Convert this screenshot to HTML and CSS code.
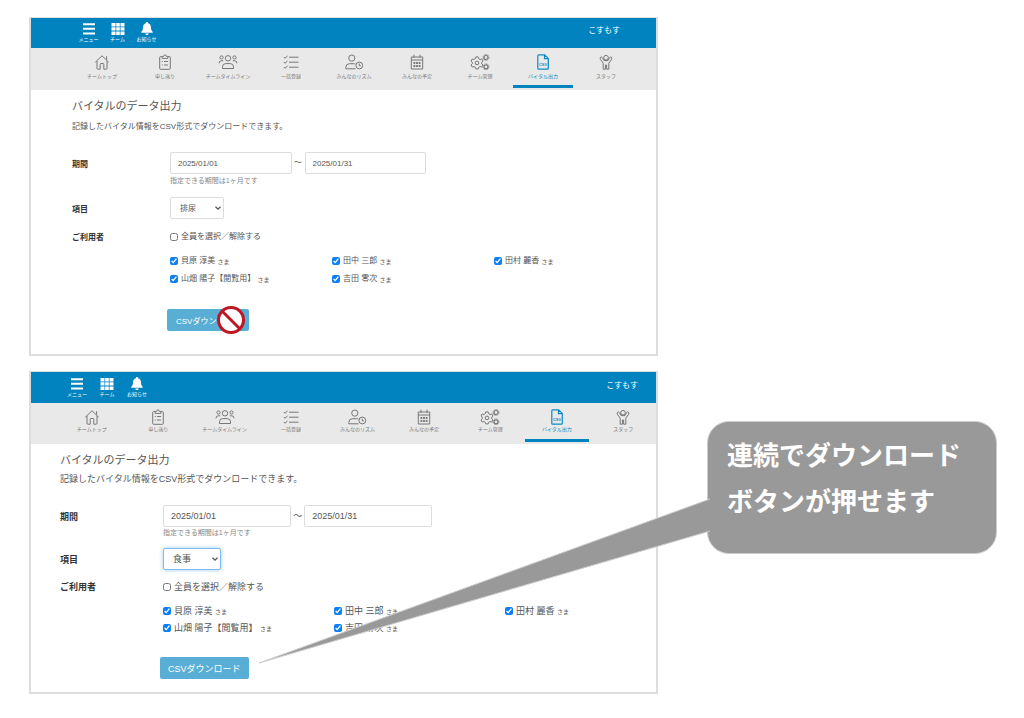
FILE: index.html
```html
<!DOCTYPE html>
<html lang="ja">
<head>
<meta charset="utf-8">
<title>バイタルのデータ出力</title>
<link rel="stylesheet" href="styles.css">
</head>
<body>
<svg class="sprite" aria-hidden="true">
  <symbol id="i-menu" viewBox="0 0 14 14"><path d="M1 2.200h12M1 6.800h12M1 11.400h12" stroke="currentColor" stroke-width="2" fill="none"/></symbol>
  <symbol id="i-grid" viewBox="0 0 14 14"><path fill="currentColor" d="M.5 1H4.500v3.400H.5zM5.200 1h3.600v3.400H5.200zM9.500 1h4v3.400h-4zM.5 5.200h4v3.400h-4zM5.200 5.200h3.600v3.400H5.200zM9.500 5.200h4v3.400h-4zM.5 9.400h4V13h-4zM5.200 9.400h3.600V13H5.200zM9.500 9.400h4V13h-4z"/></symbol>
  <symbol id="i-bell" viewBox="0 0 14 14"><path fill="currentColor" d="M7 0c.8 0 1.100.5 1.100 1.200C10 1.700 11 3.300 11 5.200c0 2.500.6 3.600 1.700 4.500v1H1.300v-1C2.400 8.800 3 7.700 3 5.200c0-1.900 1-3.500 2.900-4C5.900.5 6.200 0 7 0zM5.300 11.400h3.400C8.600 12.400 7.900 13 7 13s-1.600-.6-1.700-1.600z"/></symbol>
  <symbol id="i-home" viewBox="0 0 20 16"><path d="M3.300 8.200 10 1.800l6.700 6.400M5 7v7.300q0 .9.900.9H8.200V10.300q0-.8.800-.8h2q.8 0 .8.800v4.900h2.300q.9 0 .9-.9V7M14.600 2.200v3.600"/></symbol>
  <symbol id="i-clip" viewBox="0 0 20 16"><path d="M7.200 2.600H5.600q-.9 0-.9.900v10.900q0 .9.900.9h8.800q.9 0 .9-.9V3.500q0-.9-.9-.9h-1.600M7.200 4.400V2.400h1.400q.2-1.500 1.400-1.500t1.400 1.500h1.400v2zM9 7.500h4M9 11h4M6.800 7.500h1M6.800 11h1"/></symbol>
  <symbol id="i-team" viewBox="0 0 20 16"><circle cx="10" cy="4.300" r="2.700"/><circle cx="3.500" cy="3.500" r="1.600"/><circle cx="16.500" cy="3.500" r="1.600"/><path d="M4.500 14.500v-1.700q0-3.200 3.200-3.200h4.600q3.200 0 3.200 3.200v1.700zM1 9.300q0-2.500 2.200-2.500h2M19 9.300q0-2.500-2.200-2.500h-2"/></symbol>
  <symbol id="i-list" viewBox="0 0 20 16"><path d="M8 3.200h9.500M8 8.200h9.500M8 13.200h9.500M2.800 3l1.300 1.300 2.400-2.600M2.800 8l1.300 1.300 2.400-2.600M2.800 13l1.300 1.300 2.400-2.600"/></symbol>
  <symbol id="i-rhythm" viewBox="0 0 20 16"><circle cx="7.800" cy="4.100" r="3.100"/><path d="M11.500 14.800H1.800v-1.300q0-3.800 3.600-3.800H9.800q1 0 1.600.3"/><circle cx="15.300" cy="11.500" r="3.400"/><path d="M15.300 9.600v2.200h1.600"/></symbol>
  <symbol id="i-cal" viewBox="0 0 20 16"><path d="M4.300 3h11.400v12H4.300zM4.300 6h11.400M7 .7v3M13 .7v3"/><path d="M6.500 9h7M6.500 12h7" stroke-width="2" stroke-dasharray="1.800 .8"/></symbol>
  <symbol id="i-gears" viewBox="0 0 20 16"><path d="m5.800 2.900 2.400 0 .4 1.700 1.500.9 1.700-.6 1.200 2.100-1.300 1.200v1.600l1.300 1.200-1.200 2.100-1.700-.6-1.500.9-.4 1.500H5.800l-.4-1.500-1.500-.9-1.700.6L1 11l1.300-1.200V8.200L1 7l1.200-2.100 1.700.6 1.500-.9z"/><circle cx="7" cy="8.900" r="1.800"/><circle cx="16" cy="3.500" r="2" stroke-width="1.200"/><circle cx="16" cy="12.800" r="2" stroke-width="1.200"/><circle cx="16" cy="3.500" r="3" stroke-width=".8" stroke-dasharray="1.200 .8"/><circle cx="16" cy="12.800" r="3" stroke-width=".8" stroke-dasharray="1.200 .8"/></symbol>
  <symbol id="i-csv" viewBox="0 0 20 16"><path d="M5.700.8h6l3.600 3.600v9.900q0 .9-.9.900H5.700q-.9 0-.9-.9V1.700q0-.9.900-.9zM11.500.8v3.800h3.800" stroke-width="1.200"/><text class="csv-mark" x="10" y="12">CSV</text></symbol>
  <symbol id="i-staff" viewBox="0 0 20 16"><circle cx="10" cy="3.700" r="2.300"/><path d="M7.200 15.200V9.200L4.300 5.200q-.5-1.200.3-2 .9-.7 1.700.3L8 6.600h4l1.700-3.100q.8-1 1.700-.3.800.8.3 2l-2.900 4v6h-2.200V11H9.400v4.200z"/></symbol>
  <symbol id="i-arrow" viewBox="0 0 8 8"><path d="M1.500 2.700 4 5.200l2.500-2.500" stroke="currentColor" stroke-width="1.300" fill="none"/></symbol>
</svg>

<main class="page">
  <section class="panel panel-a">
    <header class="topbar">
      <button class="top-btn" type="button"><svg><use href="#i-menu"/></svg><span>メニュー</span></button>
      <button class="top-btn" type="button"><svg><use href="#i-grid"/></svg><span>チーム</span></button>
      <button class="top-btn" type="button"><svg><use href="#i-bell"/></svg><span>お知らせ</span></button>
      <span class="user">こすもす</span>
    </header>
    <nav class="tabs">
      <a class="tab" href="#"><svg><use href="#i-home"/></svg><span>チームトップ</span></a>
      <a class="tab" href="#"><svg><use href="#i-clip"/></svg><span>申し送り</span></a>
      <a class="tab" href="#"><svg><use href="#i-team"/></svg><span>チームタイムライン</span></a>
      <a class="tab" href="#"><svg><use href="#i-list"/></svg><span>一括登録</span></a>
      <a class="tab" href="#"><svg><use href="#i-rhythm"/></svg><span>みんなのリズム</span></a>
      <a class="tab" href="#"><svg><use href="#i-cal"/></svg><span>みんなの予定</span></a>
      <a class="tab" href="#"><svg><use href="#i-gears"/></svg><span>チーム管理</span></a>
      <a class="tab active" href="#"><svg><use href="#i-csv"/></svg><span>バイタル出力</span></a>
      <a class="tab" href="#"><svg><use href="#i-staff"/></svg><span>スタッフ</span></a>
    </nav>
    <form class="content">
      <h1 class="title">バイタルのデータ出力</h1>
      <p class="lead">記録したバイタル情報をCSV形式でダウンロードできます。</p>
      <div class="row period">
        <label class="name" for="a-from">期間</label>
        <div>
          <div class="dates"><input class="date" id="a-from" type="text" value="2025/01/01"><span class="tilde">～</span><input class="date" type="text" aria-label="終了日" value="2025/01/31"></div>
          <p class="hint">指定できる期間は1ヶ月です</p>
        </div>
      </div>
      <div class="row item">
        <label class="name" for="a-item">項目</label>
        <div class="select"><select id="a-item"><option>排尿</option></select><svg><use href="#i-arrow"/></svg></div>
      </div>
      <div class="row users">
        <span class="name">ご利用者</span>
        <div>
          <label class="check"><input type="checkbox">全員を選択／解除する</label>
          <div class="people">
            <label class="check"><input type="checkbox" checked>貝原 淳美 <small>さま</small></label>
            <label class="check"><input type="checkbox" checked>田中 三郎 <small>さま</small></label>
            <label class="check"><input type="checkbox" checked>田村 麗香 <small>さま</small></label>
            <label class="check"><input type="checkbox" checked>山畑 陽子【閲覧用】 <small>さま</small></label>
            <label class="check"><input type="checkbox" checked>吉田 零次 <small>さま</small></label>
          </div>
        </div>
      </div>
      <div class="row submit">
        <div class="stamp-box">
          <button class="download" type="button">CSVダウンロード</button>
          <svg class="stamp" viewBox="0 0 30 30" aria-label="禁止"><circle cx="15" cy="15" r="12.500" fill="#fff" stroke="#be1622" stroke-width="3"/><path d="M6.500 6.500l17 17" stroke="#be1622" stroke-width="3"/></svg>
        </div>
      </div>
    </form>
  </section>

  <section class="panel panel-b">
    <header class="topbar">
      <button class="top-btn" type="button"><svg><use href="#i-menu"/></svg><span>メニュー</span></button>
      <button class="top-btn" type="button"><svg><use href="#i-grid"/></svg><span>チーム</span></button>
      <button class="top-btn" type="button"><svg><use href="#i-bell"/></svg><span>お知らせ</span></button>
      <span class="user">こすもす</span>
    </header>
    <nav class="tabs">
      <a class="tab" href="#"><svg><use href="#i-home"/></svg><span>チームトップ</span></a>
      <a class="tab" href="#"><svg><use href="#i-clip"/></svg><span>申し送り</span></a>
      <a class="tab" href="#"><svg><use href="#i-team"/></svg><span>チームタイムライン</span></a>
      <a class="tab" href="#"><svg><use href="#i-list"/></svg><span>一括登録</span></a>
      <a class="tab" href="#"><svg><use href="#i-rhythm"/></svg><span>みんなのリズム</span></a>
      <a class="tab" href="#"><svg><use href="#i-cal"/></svg><span>みんなの予定</span></a>
      <a class="tab" href="#"><svg><use href="#i-gears"/></svg><span>チーム管理</span></a>
      <a class="tab active" href="#"><svg><use href="#i-csv"/></svg><span>バイタル出力</span></a>
      <a class="tab" href="#"><svg><use href="#i-staff"/></svg><span>スタッフ</span></a>
    </nav>
    <form class="content">
      <h1 class="title">バイタルのデータ出力</h1>
      <p class="lead">記録したバイタル情報をCSV形式でダウンロードできます。</p>
      <div class="row period">
        <label class="name" for="b-from">期間</label>
        <div>
          <div class="dates"><input class="date" id="b-from" type="text" value="2025/01/01"><span class="tilde">～</span><input class="date" type="text" aria-label="終了日" value="2025/01/31"></div>
          <p class="hint">指定できる期間は1ヶ月です</p>
        </div>
      </div>
      <div class="row item">
        <label class="name" for="b-item">項目</label>
        <div class="select focused"><select id="b-item"><option>食事</option></select><svg><use href="#i-arrow"/></svg></div>
      </div>
      <div class="row users">
        <span class="name">ご利用者</span>
        <div>
          <label class="check"><input type="checkbox">全員を選択／解除する</label>
          <div class="people">
            <label class="check"><input type="checkbox" checked>貝原 淳美 <small>さま</small></label>
            <label class="check"><input type="checkbox" checked>田中 三郎 <small>さま</small></label>
            <label class="check"><input type="checkbox" checked>田村 麗香 <small>さま</small></label>
            <label class="check"><input type="checkbox" checked>山畑 陽子【閲覧用】 <small>さま</small></label>
            <label class="check"><input type="checkbox" checked>吉田 零次 <small>さま</small></label>
          </div>
        </div>
      </div>
      <div class="row submit">
        <div class="stamp-box"><button class="download" type="button">CSVダウンロード</button></div>
      </div>
    </form>
  </section>

  <aside class="callout">
    <p>連続でダウンロード<br>ボタンが押せます</p>
    <svg class="tail" viewBox="0 0 452 166" aria-hidden="true"><path d="M452 1 1 165 452 33" fill="#999" stroke="#ccc"/></svg>
  </aside>
</main>
</body>
</html>
```
FILE: styles.css
```css
* { box-sizing: border-box; }

body {
  margin: 0;
  background: #fff;
  color: #555;
  font-family: "Liberation Sans", "Noto Sans CJK JP", sans-serif;
}

h1, p { margin: 0; }

button, input, select { font-family: inherit; }

.sprite { display: none; }

.page {
  display: grid;
  grid-template-columns: minmax(0, 629fr) minmax(0, 290fr);
  column-gap: 49px;
  row-gap: 15px;
  align-items: start;
  padding: 17px 27px 24px 29px;
}

.panel {
  grid-column: 1;
  border: 2px solid #ddd;
  border-top-width: 1px;
}

.panel-a {
  --text: 8px;
  --label-col: 98px;
  --inset: 41px;
  --tabs-end: 20px;
  --user-end: 36px;
  --top-inset: 43px;
  --top-btn: 29px;
  --top-pad: 4px;
  --bar: 30px;
  --nav: 42px;
  --date: 25%;
  --select: 54px;
  --cols: 1fr 1fr 1fr;
}

.panel-b {
  --text: 9px;
  --label-col: 103px;
  --inset: 29px;
  --tabs-end: 1px;
  --user-end: 18px;
  --top-inset: 31px;
  --top-btn: 30px;
  --top-pad: 5px;
  --bar: 31px;
  --nav: 41px;
  --date: 26%;
  --select: 58px;
  --cols: 171fr 171fr 151fr;
}

.topbar {
  display: flex;
  align-items: flex-start;
  min-height: var(--bar);
  padding: var(--top-pad) var(--user-end) 0 var(--top-inset);
  background: #0083bf;
  color: #fff;
}

.top-btn {
  display: flex;
  flex-direction: column;
  align-items: center;
  width: var(--top-btn);
  padding: 0;
  border: 0;
  background: none;
  color: inherit;
  font-size: 5px;
  line-height: 7px;
  white-space: nowrap;
}

.top-btn svg { width: 14px; height: 14px; }

.user {
  margin-left: auto;
  font-size: 8px;
  line-height: 18px;
}

.tabs {
  display: grid;
  grid-template-columns: repeat(9, minmax(0, 1fr));
  column-gap: 3px;
  min-height: var(--nav);
  padding: 6px var(--tabs-end) 2px var(--inset);
  background: #e9e9e9;
}

.tab {
  display: flex;
  flex-direction: column;
  align-items: center;
  gap: 2px;
  border-bottom: 3px solid transparent;
  color: #777;
  font-size: 5px;
  line-height: 8px;
  text-decoration: none;
  white-space: nowrap;
}

.panel-b .tab { gap: 0; }

.tab svg {
  width: 20px;
  height: 16px;
  fill: none;
  stroke: currentColor;
  stroke-width: 1;
}

.tab.active {
  border-color: #0083bf;
  color: #0b8bc5;
}

.csv-mark {
  fill: currentColor;
  stroke: none;
  font-size: 4px;
  font-weight: bold;
  text-anchor: middle;
}

.content {
  padding: 8px 0 23px var(--inset);
  font-size: var(--text);
}

.panel-b .content { padding: 8px 0 13px var(--inset); }

.title {
  font-size: 11px;
  font-weight: normal;
  line-height: 16px;
}

.lead {
  margin-top: 7px;
  line-height: 12px;
}

.panel-b .lead { margin-top: 5px; }

.row {
  display: grid;
  grid-template-columns: var(--label-col) minmax(0, 1fr);
}

.name {
  color: #333;
  font-weight: bold;
  line-height: 24px;
}

.panel-a .name { line-height: 26px; }

.period { margin-top: 19px; }

.panel-b .period { margin-top: 20px; }

.dates { display: flex; }

.date {
  flex: 0 0 var(--date);
  min-width: 0;
  height: 22px;
  padding: 0 7px;
  border: 1px solid #ddd;
  border-radius: 2px;
  background: #fff;
  color: #555;
  font-size: var(--text);
}

.tilde {
  width: 13px;
  line-height: 22px;
  text-align: center;
}

.hint {
  margin-top: 1px;
  color: #888;
  font-size: 7px;
  line-height: 12px;
}

.panel-b .hint { margin-top: 0; }

.item {
  align-items: start;
  margin-top: 10px;
}

.panel-b .item { margin-top: 9px; }

.item .name { height: 22px; }

.select {
  position: relative;
  width: var(--select);
  height: 22px;
}

.select select {
  width: 100%;
  height: 100%;
  padding: 0 9px;
  border: 1px solid #ddd;
  border-radius: 2px;
  appearance: none;
  background: #fff;
  color: #555;
  font-size: var(--text);
}

.select svg {
  position: absolute;
  top: 7px;
  right: 2px;
  width: 8px;
  height: 8px;
  pointer-events: none;
}

.select.focused select {
  border-color: #80bdee;
  box-shadow: 0 0 4px #9ccbf0;
}

.users { margin-top: 11px; }

.panel-b .users { margin-top: 10px; }

.users .name,
.panel-a .users .name { line-height: 15px; }

.check {
  display: flex;
  align-items: center;
  line-height: 14px;
  white-space: pre;
}

.check input {
  width: 8px;
  height: 8px;
  margin: 0 3px 0 0;
  accent-color: #0d7ff2;
}

.check small {
  align-self: flex-end;
  font-size: 6px;
  line-height: 12px;
}

.people {
  display: grid;
  grid-template-columns: var(--cols);
  row-gap: 4px;
  margin-top: 10px;
}

.panel-b .people { row-gap: 3px; }

.submit { margin-top: 23px; }

.panel-b .submit { margin-top: 22px; }

.stamp-box {
  position: relative;
  grid-column: 2;
  justify-self: start;
  margin-left: -3px;
}

.download {
  display: block;
  height: 22px;
  padding: 0 9px;
  border: 0;
  border-radius: 2px;
  background: #58aed5;
  color: #fff;
  font-size: var(--text);
}

.panel-b .download { padding: 0 8px; }

.stamp {
  position: absolute;
  top: -4px;
  right: 3px;
  width: 30px;
  height: 30px;
}

.callout {
  position: relative;
  grid-column: 2;
  grid-row: 2;
  margin-top: 50px;
  padding: 11px 0 28px 19px;
  border: 1px solid #ccc;
  border-radius: 22px;
  background: #999;
  color: #fff;
  font-size: 26px;
  font-weight: bold;
  line-height: 46px;
  white-space: nowrap;
}

.tail {
  position: absolute;
  top: 76px;
  right: 100%;
  width: 452px;
  height: 166px;
  margin-right: -2px;
}
```
